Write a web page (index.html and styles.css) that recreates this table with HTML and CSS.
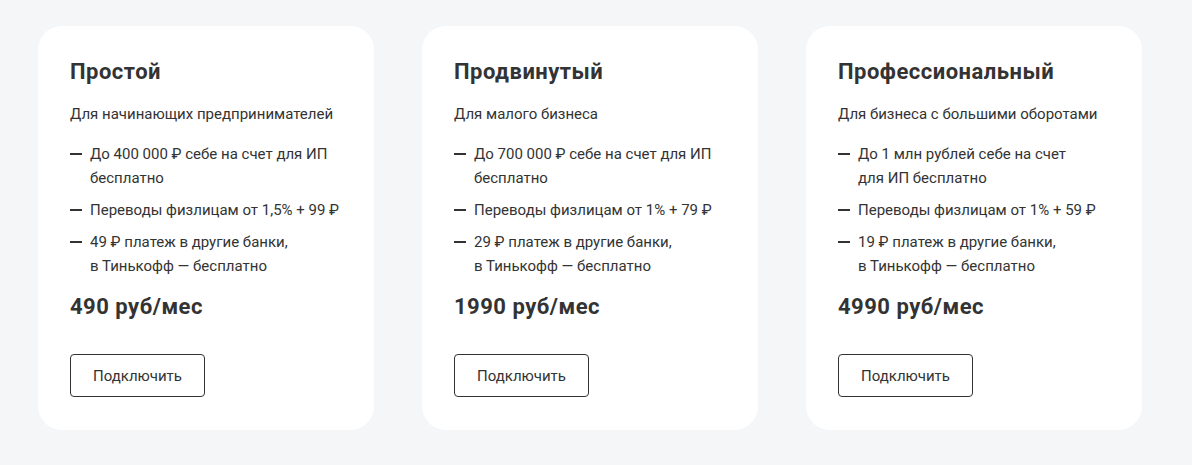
FILE: index.html
```html
<!DOCTYPE html>
<html lang="ru">
<head>
<meta charset="utf-8">
<link rel="stylesheet" href="styles.css">
</head>
<body>
<div class="plans">
  <div class="card">
    <h2 class="title">Простой</h2>
    <p class="subtitle">Для начинающих предпринимателей</p>
    <ul class="features">
      <li>До 400 000 ₽ себе на счет для ИП<br>бесплатно</li>
      <li>Переводы физлицам от 1,5% + 99 ₽</li>
      <li>49 ₽ платеж в другие банки,<br>в Тинькофф — бесплатно</li>
    </ul>
    <div class="price">490 руб/мес</div>
    <button class="btn">Подключить</button>
  </div>
  <div class="card">
    <h2 class="title">Продвинутый</h2>
    <p class="subtitle">Для малого бизнеса</p>
    <ul class="features">
      <li>До 700 000 ₽ себе на счет для ИП<br>бесплатно</li>
      <li>Переводы физлицам от 1% + 79 ₽</li>
      <li>29 ₽ платеж в другие банки,<br>в Тинькофф — бесплатно</li>
    </ul>
    <div class="price">1990 руб/мес</div>
    <button class="btn">Подключить</button>
  </div>
  <div class="card">
    <h2 class="title">Профессиональный</h2>
    <p class="subtitle">Для бизнеса с большими оборотами</p>
    <ul class="features">
      <li>До 1 млн рублей себе на счет<br>для ИП бесплатно</li>
      <li>Переводы физлицам от 1% + 59 ₽</li>
      <li>19 ₽ платеж в другие банки,<br>в Тинькофф — бесплатно</li>
    </ul>
    <div class="price">4990 руб/мес</div>
    <button class="btn">Подключить</button>
  </div>
</div>
</body>
</html>
```
FILE: styles.css
```css
html, body {
  margin: 0;
  padding: 0;
  background: #f5f6f8;
  font-family: "Roboto", "Inter", sans-serif;
  color: #333333;
}
.plans {
  display: flex;
  gap: 48px;
  padding: 26px 50px 35px 38px;
}
.card {
  width: 336px;
  height: 404px;
  box-sizing: border-box;
  background: #ffffff;
  border-radius: 24px;
  padding: 32px 32px 33px;
  display: flex;
  flex-direction: column;
  align-items: flex-start;
  white-space: nowrap;
}
.title {
  margin: 0;
  font-size: 22px;
  line-height: 28px;
  font-weight: 700;
  letter-spacing: 0.5px;
}
.subtitle {
  margin: 16px 0 0;
  font-size: 15px;
  line-height: 24px;
}
.features {
  list-style: none;
  margin: 16px 0 0;
  padding: 0;
  display: flex;
  flex-direction: column;
  gap: 8px;
}
.features li {
  position: relative;
  padding-left: 20px;
  font-size: 15px;
  line-height: 24px;
}
.features li::before {
  content: "";
  position: absolute;
  left: 0;
  top: 11px;
  width: 12px;
  height: 2px;
  background: #333333;
}
.price {
  margin-top: 15px;
  font-size: 22px;
  line-height: 28px;
  font-weight: 700;
  letter-spacing: 0.5px;
}
.btn {
  margin-top: auto;
  width: 135px;
  height: 43px;
  background: #ffffff;
  border: 1px solid #333333;
  border-radius: 4px;
  font-family: inherit;
  font-size: 15px;
  color: #333333;
  padding: 0;
}
```
